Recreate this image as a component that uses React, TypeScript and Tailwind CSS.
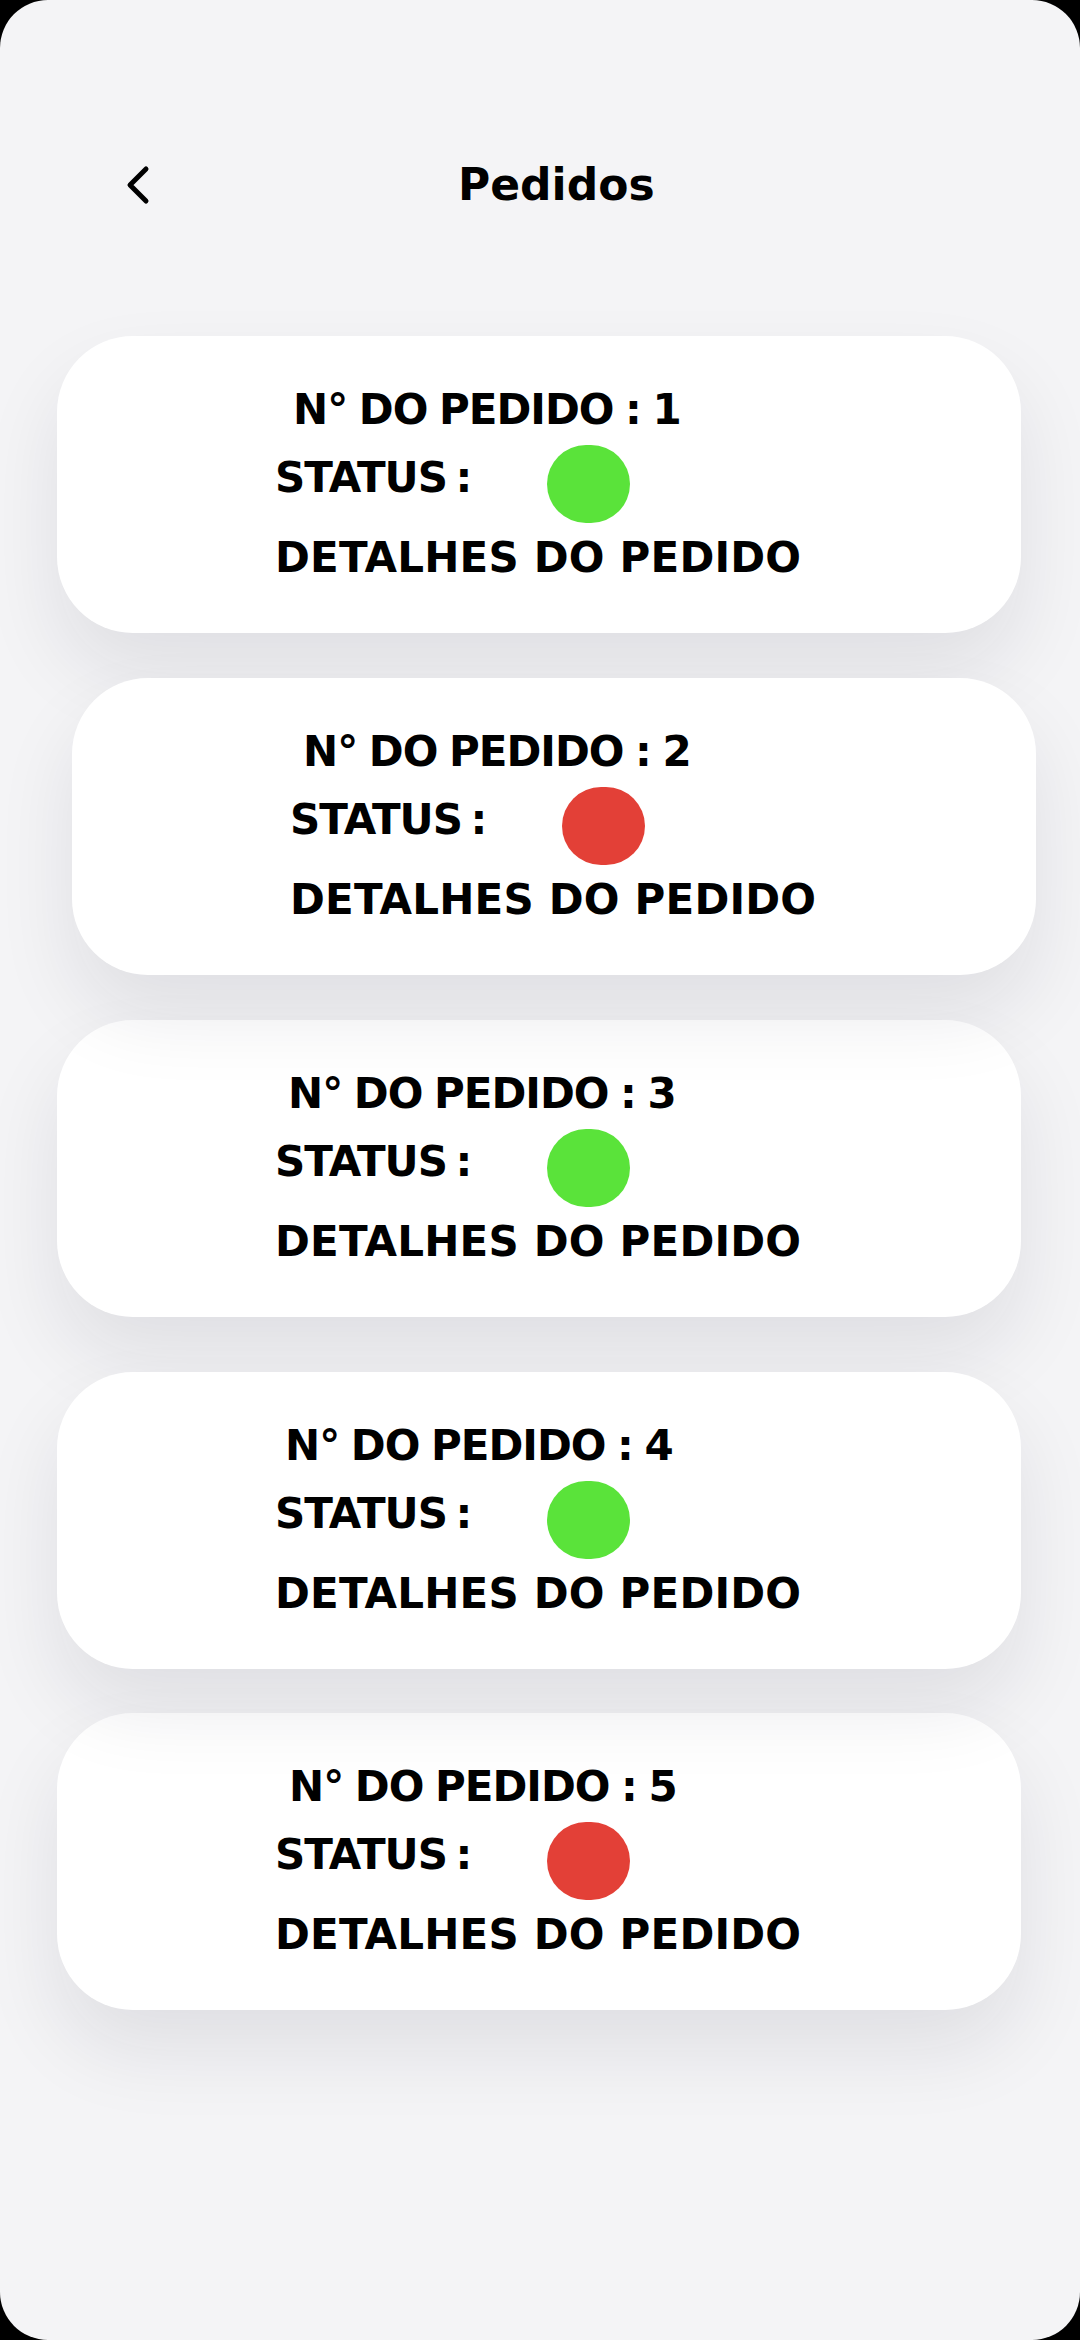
import React from 'react';

type Order = {
  id: number;
  ok: boolean;
  shift: string;   // horizontal placement of the card
  numPad: string;  // indent of the order number line
  raised: boolean; // shadow drawn over the next card
};

const orders: Order[] = [
  { id: 1, ok: true, shift: 'ml-[57px]', numPad: 'pl-[18px]', raised: false },
  { id: 2, ok: false, shift: 'ml-[72px]', numPad: 'pl-[13px]', raised: true },
  { id: 3, ok: true, shift: 'ml-[57px]', numPad: 'pl-[13px]', raised: false },
  { id: 4, ok: true, shift: 'ml-[57px]', numPad: 'pl-[10px]', raised: true },
  { id: 5, ok: false, shift: 'ml-[57px]', numPad: 'pl-[14px]', raised: false },
];

const gaps = ['mt-0', 'mt-[45px]', 'mt-[45px]', 'mt-[55px]', 'mt-[44px]'];

const OrderCard: React.FC<{ order: Order; gap: string }> = ({ order, gap }) => (
  <div
    className={`${gap} ${order.shift} ${order.raised ? 'z-10' : 'z-0'} relative w-[964px] h-[297px] bg-white rounded-[76px] shadow-[0_40px_80px_rgba(20,20,40,0.09)] flex flex-col pl-[218px] pt-[53px] text-black`}
  >
    <span className={`${order.numPad} text-[42px] leading-none font-bold tracking-[-1px] [word-spacing:-2px]`}>
      N° DO PEDIDO : {order.id}
    </span>
    <div className="mt-[14px] flex items-start h-[78px]">
      <span className="w-[272px] mt-[12px] text-[42px] leading-none font-bold tracking-[-1px] [word-spacing:-5px]">STATUS :</span>
      <span
        className={`w-[83px] h-[78px] rounded-full ${order.ok ? 'bg-[#5ae33a]' : 'bg-[#e34037]'}`}
      />
    </div>
    <span className="mt-[14px] text-[42px] leading-none font-bold tracking-[0.2px]">DETALHES DO PEDIDO</span>
  </div>
);

const App: React.FC = () => {
  return (
    <div className="w-[1080px] h-[2340px] bg-black" style={{ fontFamily: '"DejaVu Sans", "Noto Sans", sans-serif' }}>
      <div className="w-full h-full bg-[#f4f4f6] rounded-[48px] overflow-hidden flex flex-col">
        {/* Header */}
        <div className="mt-[163px] h-[44px] flex items-center pl-[126px]">
          <svg width="24" height="40" viewBox="0 0 24 40" fill="none" className="shrink-0">
            <path d="M20 4 L4 20 L20 36" stroke="#000" strokeWidth="5" strokeLinecap="round" strokeLinejoin="round" />
          </svg>
          <h1 className="ml-[308px] text-[44px] leading-none font-bold text-black">Pedidos</h1>
        </div>

        {/* Orders */}
        <div className="mt-[129px] flex flex-col">
          {orders.map((o, i) => (
            <OrderCard key={o.id} order={o} gap={gaps[i]} />
          ))}
        </div>
      </div>
    </div>
  );
};

export default App;
